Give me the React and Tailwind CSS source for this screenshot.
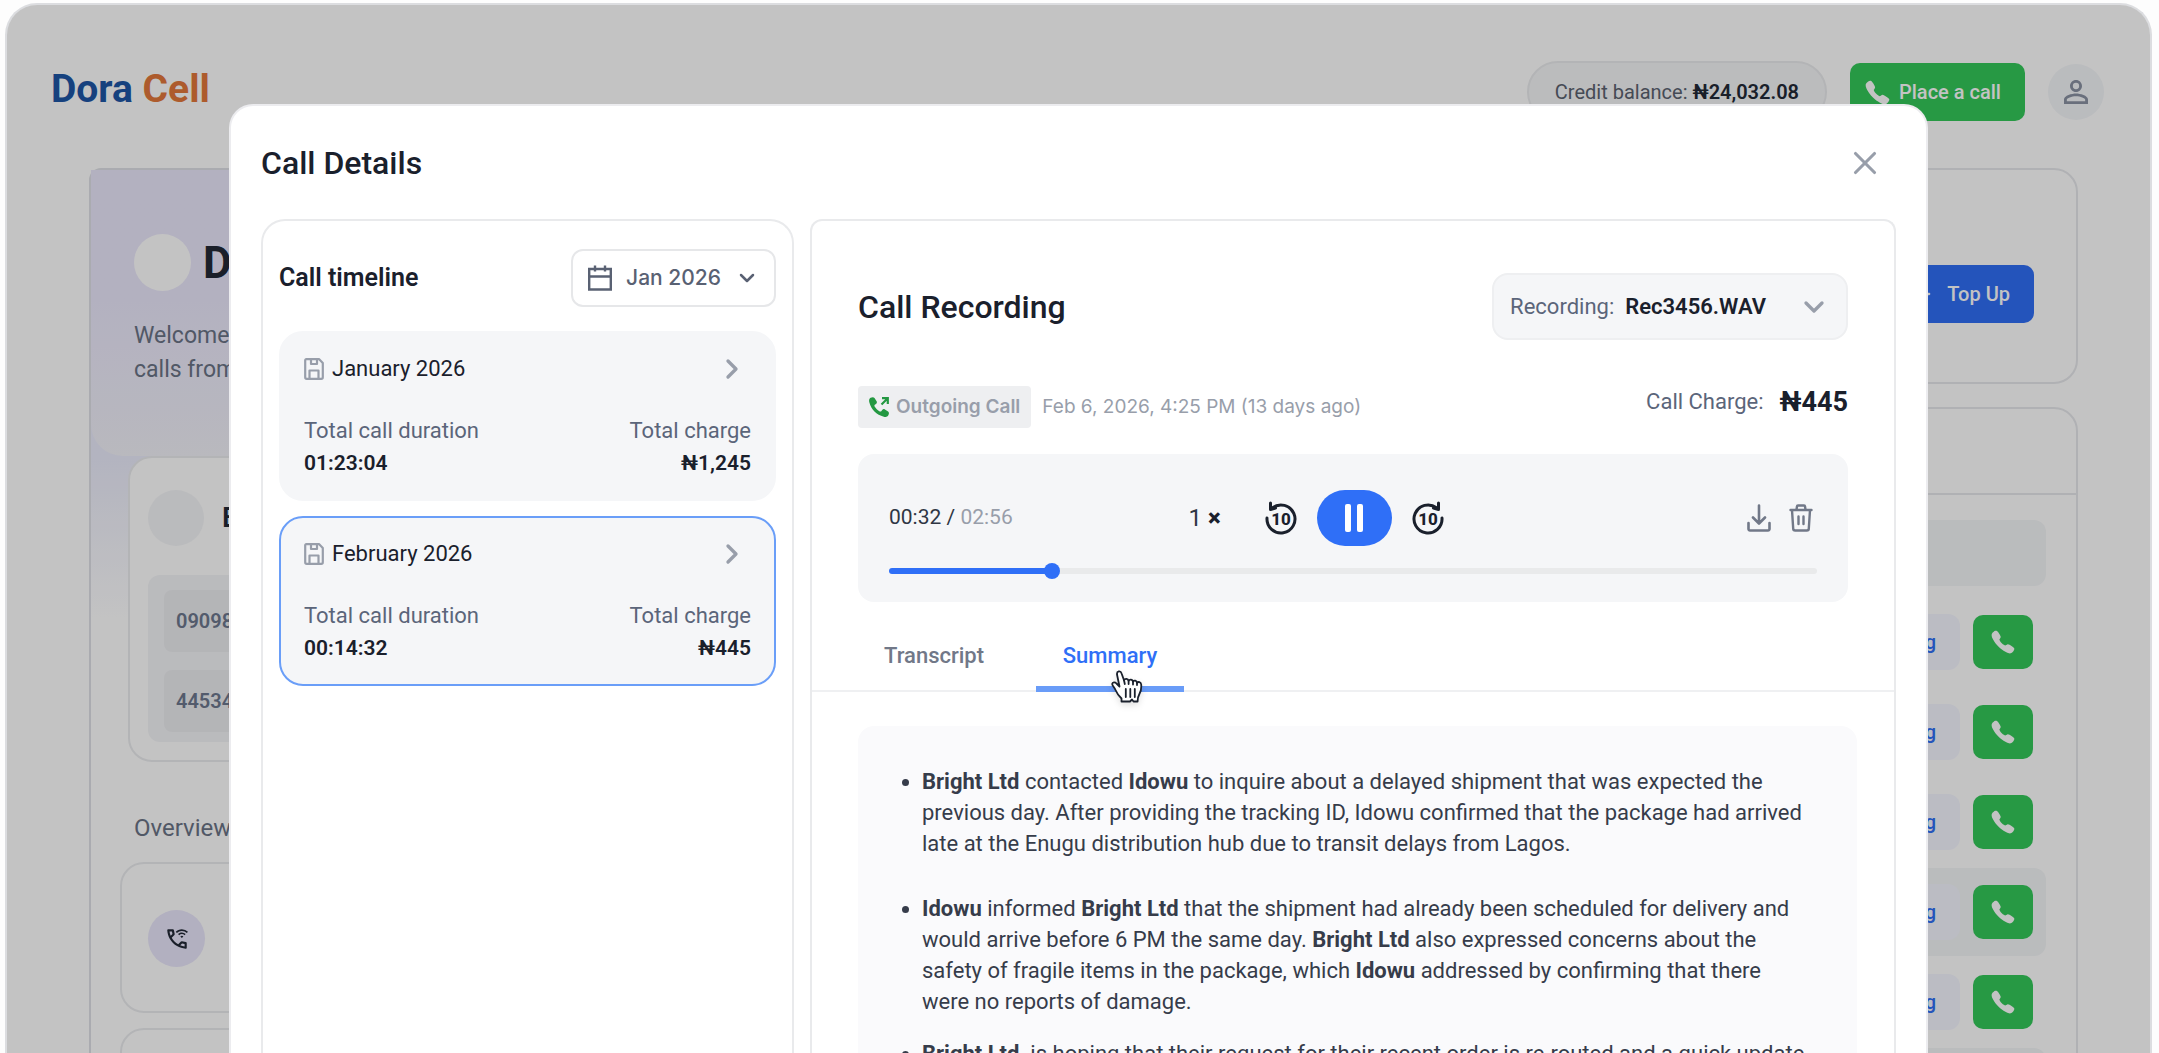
import React, { useState } from 'react';
import { ChevronDown, ChevronRight, Plus, X } from 'lucide-react';
import { IoCall } from 'react-icons/io5';
import { MdPersonOutline, MdOutlineWifiCalling3 } from 'react-icons/md';

const months = [
    { id: 'jan', name: 'January 2026', duration: '01:23:04', charge: '₦1,245' },
    { id: 'feb', name: 'February 2026', duration: '00:14:32', charge: '₦445' },
];

const contacts = [
    { id: 1, shaded: false },
    { id: 2, shaded: false },
    { id: 3, shaded: false },
    { id: 4, shaded: true },
    { id: 5, shaded: false },
    { id: 6, shaded: true },
];

const numbers = ['09098765432', '44534210987'];

const SaveIcon = () => (
    <svg className="w-5 h-[22px] text-[#989eaa]" viewBox="0 0 20 22" fill="none" stroke="currentColor" strokeWidth="2.2" strokeLinejoin="round">
        <path d="M2.200 1.200h13L18.800 5V19.300a1.500 1.500 0 0 1-1.500 1.500H2.700A1.500 1.500 0 0 1 1.200 19.300V2.200a1 1 0 0 1 1-1Z" />
        <path d="M7 1.500V6h6V1.500M5.500 20.500V12.500h9V20.500" />
    </svg>
);

const CalendarIcon = () => (
    <svg className="w-6 h-[26px]" viewBox="0 0 24 26" fill="none" stroke="currentColor" strokeWidth="2.4">
        <path d="M1.200 4h21.600v20.500H1.200ZM1 11.500h22M7 .5v6M17 .5v6" />
    </svg>
);

const OutgoingIcon = () => (
    <svg className="w-5 h-5 text-[#249842]" viewBox="0 0 20 20" fill="currentColor">
        <path d="M1.600.8C3 0 4.600-.2 5.500 1L7.600 4.200c.6 1 .3 2-.6 2.700L5.800 7.800c-.6.6-.5 1.200 0 2 1.200 1.900 2.600 3.300 4.500 4.400.8.5 1.400.6 2 0l.9-1.200c.7-.9 1.700-1.200 2.700-.6l3.200 2.100c1.200.9 1 2.500.1 3.900-1 1.300-2.600 1.800-4.400 1.300C7.500 17.800 2 12.200.300 5.200-.200 3.400.200 1.700 1.600.8Z" />
        <path d="M13 1.200h5.800V7M18.500 1.500 12.500 7.500" fill="none" stroke="currentColor" strokeWidth="2.200" />
    </svg>
);

const SkipIcon = ({ forward }) => (
    <svg className="w-8 h-[34px]" viewBox="0 0 32 34" fill="none" stroke="currentColor" strokeWidth="3" strokeLinecap="round" strokeLinejoin="round">
        <g transform={forward ? 'translate(32 0) scale(-1 1)' : undefined}>
            <path d="M2 17A14 14 0 1 0 7.500 6.800" />
            <path d="M5.500 2v6.500l5-1.500" />
        </g>
        <text x="16" y="24" textAnchor="middle" fill="currentColor" stroke="none" fontSize="17" fontWeight="800">10</text>
    </svg>
);

const DownloadIcon = () => (
    <svg className="w-6 h-7" viewBox="0 0 24 28" fill="none" stroke="currentColor" strokeWidth="2.6" strokeLinecap="round" strokeLinejoin="round">
        <path d="M12 1.500v17.500M6 13.500l6 6 6-6M1.500 19v6a1.500 1.500 0 0 0 1.500 1.500h18A1.500 1.500 0 0 0 22.500 25v-6" />
    </svg>
);

const TrashIcon = () => (
    <svg className="w-6 h-7" viewBox="0 0 24 28" fill="none" stroke="currentColor" strokeWidth="2.4" strokeLinecap="round" strokeLinejoin="round">
        <path d="M1.500 6h21M7.500 5.500 8 2.500a1 1 0 0 1 1-1h6a1 1 0 0 1 1 1l.5 3M3 6l1.200 18.500a2 2 0 0 0 2 2h11.600a2 2 0 0 0 2-2L21 6M9.500 12.500v7.500M14.500 12.500v7.500" />
    </svg>
);

const HandCursor = () => (
    <svg className="w-8 h-[34px] drop-shadow-md" viewBox="0 0 32 34" fill="#fff" stroke="#1a202c" strokeWidth="1.800" strokeLinejoin="round" strokeLinecap="round">
        <path d="M10.500 31.500v-3C8 26 5.500 22.500 4.500 20 3.500 17.500 1 15.500 1.200 13.800 1.500 12 4 11.800 5.500 13.500L8.500 16.500 6 4.500C5.600 1 9.600.200 10.600 3.500L13 10.200C14 8.200 17 8.500 17.600 10.800 18.800 9 21.500 9.400 22 11.600 23.200 10 25.600 10.500 26 12.800 27.200 11.400 30 12 30.200 14.500 30.500 18 30 21 28.600 23.500 27.200 26 26.600 28 26.600 31.500H22.500L21 29.500 19 31.500Z" />
        <path d="M13 10.200 13.800 14M17.600 10.800V14M22 11.600V14.500M26 12.800V15" />
        <path d="M14.800 19v8M19.300 19v8M23.800 19v8" />
    </svg>
);

const Dashboard = () => (
    <div className="text-[#222936]">
        <header className="flex items-center justify-between h-[62px] mt-14 pl-11 pr-[46px]">
            <div className="pb-1.5 text-[39px] font-bold text-[#1e56a5]">
                Dora <span className="text-[#e2783b]">Cell</span>
            </div>
            <div className="flex items-center gap-[23px]">
                <div className="flex items-center h-[62px] px-[26px] rounded-full border-2 border-[#ebecee] bg-[#f5f6f8] text-xl text-[#5b6270]">
                    Credit balance:&nbsp;<span className="font-semibold text-[#222936]">₦24,032.08</span>
                </div>
                <button className="flex items-center gap-2 w-[175px] h-[58px] pl-3.5 rounded-[10px] bg-[#34c85a] text-white text-xl font-medium">
                    <IoCall size={27} />
                    Place a call
                </button>
                <button aria-label="Account" className="flex items-center justify-center w-14 h-14 rounded-full bg-[#f4f6f9] text-[#8a92a3]">
                    <MdPersonOutline size={36} />
                </button>
            </div>
        </header>

        <div className="flex items-start justify-between mt-[45px] pl-[82px] pr-[72px]">
            {/* Welcome column */}
            <section className="w-1/2 h-[1000px] rounded-xl border-2 border-[#dfe0e6] bg-linear-to-b from-[#ebe8fd] via-[#ebecfb] via-29% to-white to-45%">
                <div className="h-[286px] pt-16 pl-[43px] rounded-b-4xl bg-linear-to-b from-[#ebe8fc] from-45% to-[#f2f2f9]">
                    <div className="flex items-center gap-3">
                        <div className="size-[57px] rounded-full bg-white" />
                        <h1 className="text-[44px] leading-[56px] font-bold">Dora</h1>
                    </div>
                    <p className="mt-7 text-[23px] leading-[34px] text-[#6a7386]">
                        Welcome back, manage your<br />calls from one place
                    </p>
                </div>
                <div className="ml-[37px] h-[306px] rounded-3xl border-2 border-[#ebecef] bg-white pl-[18px] pt-8">
                    <div className="flex items-center gap-[18px]">
                        <div className="size-14 rounded-full bg-[#f4f5f8]" />
                        <span className="text-[28px] font-semibold">Enugu Office</span>
                    </div>
                    <ul className="mt-[29px] h-[167px] space-y-[18px] rounded-xl bg-[#f4f5f8] pl-4 pt-[15px] text-xl font-semibold text-[#6d788e]">
                        {numbers.map(number => (
                            <li key={number} className="flex items-center h-[62px] pl-3 rounded-lg bg-[#ecedf0]">{number}</li>
                        ))}
                    </ul>
                </div>
                <h2 className="mt-[49px] ml-[43px] text-2xl leading-[34px] text-[#6a7386]">Overview</h2>
                <div className="ml-[29px] mt-[17px] h-[151px] rounded-3xl border-2 border-[#ebecef] pl-[26px] pt-[46px]">
                    <div className="flex items-center justify-center size-[57px] rounded-full bg-[#e9e6fb]">
                        <MdOutlineWifiCalling3 size={26} />
                    </div>
                </div>
                <div className="ml-[29px] mt-[15px] h-[151px] rounded-3xl border-2 border-[#ebecef]" />
            </section>

            {/* Balance and recent calls column */}
            <div className="w-1/3">
                <section className="flex items-end justify-end h-[216px] pr-[42px] pb-[59px] rounded-3xl border-2 border-[#e7e8ec]">
                    <button className="flex items-center gap-3 h-[58px] px-6 rounded-[10px] bg-[#306ef5] text-white text-xl font-medium">
                        <Plus size={28} />
                        Top Up
                    </button>
                </section>
                <section className="mt-[23px] rounded-3xl border-2 border-[#e7e8ec]">
                    <div className="h-[86px] border-b-2 border-[#e7e8ec]" />
                    <div className="px-[30px] pt-[25px]">
                        <div className="h-[66px] rounded-xl bg-[#f4f6f8]" />
                        <ul className="mt-3 space-y-0.5">
                            {contacts.map(contact => (
                                <li key={contact.id} className={`flex items-center justify-end gap-[13px] h-[88px] pr-[13px] rounded-xl ${contact.shaded ? 'bg-[#f4f6f8]' : ''}`}>
                                    <button className="h-14 px-6 rounded-xl bg-[#f5f6ff] text-[#306ef5] text-xl font-medium">Recording</button>
                                    <button aria-label="Call" className="flex items-center justify-center w-[60px] h-[54px] rounded-[10px] bg-[#34c85a] text-white">
                                        <IoCall size={26} />
                                    </button>
                                </li>
                            ))}
                        </ul>
                    </div>
                </section>
            </div>
        </div>
    </div>
);

const CallTimeline = () => {
    const [selected, setSelected] = useState('feb');

    return (
        <aside className="w-[533px] shrink-0 px-4 pt-7 rounded-t-3xl border-2 border-b-0 border-[#e9eaec]">
            <div className="flex items-center justify-between">
                <h3 className="text-[25px] font-semibold">Call timeline</h3>
                <button className="flex items-center h-[58px] px-[15px] rounded-xl border-2 border-[#e6e7e9] font-['Inter',sans-serif] text-[21px] font-medium text-[#596173]">
                    <CalendarIcon />
                    <span className="mx-[14px]">Jan 2026</span>
                    <ChevronDown size={24} strokeWidth={2.5} />
                </button>
            </div>
            <div className="mt-6 flex flex-col gap-[15px]">
                {months.map(month => (
                    <button
                        key={month.id}
                        onClick={() => setSelected(month.id)}
                        className={`h-[170px] px-[23px] text-left rounded-3xl border-2 bg-[#f5f6f8] text-[22px] leading-8 ${selected === month.id ? 'border-[#6a9ef8]' : 'border-[#f5f6f8]'}`}
                    >
                        <div className="flex items-center justify-between pr-[3px]">
                            <div className="flex items-center gap-2">
                                <SaveIcon />
                                <span>{month.name}</span>
                            </div>
                            <ChevronRight size={32} strokeWidth={2.5} className="text-[#989eaa]" />
                        </div>
                        <div className="mt-[30px] flex justify-between">
                            <div>
                                <div className="text-[#5b657a]">Total call duration</div>
                                <div className="text-[21px] font-semibold">{month.duration}</div>
                            </div>
                            <div className="text-right">
                                <div className="text-[#5b657a]">Total charge</div>
                                <div className="text-[21px] font-semibold">{month.charge}</div>
                            </div>
                        </div>
                    </button>
                ))}
            </div>
        </aside>
    );
};

const Player = () => {
    const [progress, setProgress] = useState(17);

    return (
        <div className="mt-[26px] h-[148px] px-[31px] pt-9 rounded-2xl bg-[#f5f6f8]">
            <div className="flex items-center h-14">
                <div className="flex-1 text-[21px] text-[#2f3644]">
                    00:32 / <span className="text-[#989eaa]">02:56</span>
                </div>
                <div className="flex items-center pr-[70px]">
                    <button className="flex items-center gap-1.5 mr-11 text-2xl text-[#2f3644]">
                        1 <span className="font-black text-[#1a202c]">×</span>
                    </button>
                    <button aria-label="Back 10 seconds"><SkipIcon /></button>
                    <button aria-label="Pause" className="flex items-center justify-center gap-1.5 w-[75px] h-14 mx-5 rounded-full bg-[#2f6ff7]">
                        <span className="w-1.5 h-7 rounded-xs bg-white" />
                        <span className="w-1.5 h-7 rounded-xs bg-white" />
                    </button>
                    <button aria-label="Forward 10 seconds"><SkipIcon forward /></button>
                </div>
                <div className="flex flex-1 justify-end gap-[18px] pr-1 text-[#717888]">
                    <button aria-label="Download"><DownloadIcon /></button>
                    <button aria-label="Delete"><TrashIcon /></button>
                </div>
            </div>
            <input
                type="range"
                aria-label="Seek"
                value={progress}
                onChange={e => setProgress(Number(e.target.value))}
                style={{ backgroundImage: `linear-gradient(to right, #2f6ff7 ${progress}%, #e9eaeb ${progress}%)` }}
                className="block w-full h-1.5 mt-[22px] rounded-full appearance-none [&::-webkit-slider-thumb]:appearance-none [&::-webkit-slider-thumb]:size-4 [&::-webkit-slider-thumb]:rounded-full [&::-webkit-slider-thumb]:bg-[#2f6ff7]"
            />
        </div>
    );
};

const Summary = () => (
    <div className="ml-[46px] mr-[37px] mt-[34px] pt-10 pl-16 rounded-t-2xl bg-[#fafafc] text-[22px] leading-[31px] text-[#363c4a] whitespace-nowrap">
        <ul className="list-disc">
            <li>
                <b>Bright Ltd</b> contacted <b>Idowu</b> to inquire about a delayed shipment that was expected the<br />
                previous day. After providing the tracking ID, Idowu confirmed that the package had arrived<br />
                late at the Enugu distribution hub due to transit delays from Lagos.
            </li>
            <li className="mt-[34px]">
                <b>Idowu</b> informed <b>Bright Ltd</b> that the shipment had already been scheduled for delivery and<br />
                would arrive before 6 PM the same day. <b>Bright Ltd</b> also expressed concerns about the<br />
                safety of fragile items in the package, which <b>Idowu</b> addressed by confirming that there<br />
                were no reports of damage.
            </li>
            <li className="mt-[21px]">
                <b>Bright Ltd</b>&nbsp; is hoping that their request for their recent order is re-routed and a quick update
            </li>
        </ul>
    </div>
);

const CallRecording = () => (
    <section className="flex-1 min-w-0 rounded-t-xl border-2 border-b-0 border-[#e9eaec]">
        <div className="pt-[52px] px-[46px]">
            <div className="flex items-center justify-between">
                <h3 className="text-[32px] font-medium">Call Recording</h3>
                <button className="flex items-center h-[67px] pl-4 pr-4 rounded-2xl border-2 border-[#eeeff1] bg-[#f5f6f8] text-[22px]">
                    <span className="text-[#5b657a]">Recording:</span>
                    <span className="ml-[11px] mr-8 font-semibold">Rec3456.WAV</span>
                    <ChevronDown size={32} strokeWidth={2.5} className="text-[#989eaa]" />
                </button>
            </div>
            <div className="mt-[46px] flex items-start justify-between">
                <div className="flex items-center gap-[11px] font-['Inter',sans-serif] text-[19px] text-[#989eaa]">
                    <span className="flex items-center gap-[7px] h-[42px] px-[11px] rounded bg-[#eeeff1] font-semibold">
                        <OutgoingIcon />
                        Outgoing Call
                    </span>
                    Feb 6, 2026, 4:25 PM (13 days ago)
                </div>
                <div className="flex items-center gap-4 text-[22px] leading-8 text-[#5b657a]">
                    Call Charge:
                    <span className="text-[27px] font-bold text-[#1a202c]">₦445</span>
                </div>
            </div>
            <Player />
        </div>
        <div role="tablist" className="flex h-[90px] pl-[46px] border-b-2 border-[#eff0f2] text-[22px] font-medium">
            <button role="tab" aria-selected="false" className="w-[178px] pt-[18px] pl-[26px] text-left text-[#717888]">Transcript</button>
            <button role="tab" aria-selected="true" className="relative w-[148px] pt-[22px] -mb-0.5 border-b-[6px] border-[#699cf8] text-[#2f6ff7]">
                Summary
                <span className="absolute left-[75px] top-[68px]"><HandCursor /></span>
            </button>
        </div>
        <Summary />
    </section>
);

const App = () => (
    <div className="h-screen overflow-hidden pl-[5px] pr-[7px] pt-[3px] bg-[#fdfdfd] font-['Roboto',sans-serif]">
        <div className="relative h-full overflow-hidden rounded-t-4xl border-2 border-b-0 border-[#dcdde0] bg-white">
            <Dashboard />
            <div className="absolute inset-0 flex bg-black/[0.235] pt-[99px] px-[222px]">
                <div role="dialog" aria-labelledby="dialog-title" className="flex flex-1 flex-col min-w-0 px-[30px] rounded-t-3xl border-2 border-b-0 border-[#ececef] bg-white text-[#1a202c]">
                    <div className="flex items-center justify-between h-[113px] pr-3">
                        <h2 id="dialog-title" className="text-[32px] font-medium">Call Details</h2>
                        <button aria-label="Close"><X size={38} className="text-[#989eaa]" /></button>
                    </div>
                    <div className="flex flex-1 min-h-0 gap-4">
                        <CallTimeline />
                        <CallRecording />
                    </div>
                </div>
            </div>
        </div>
    </div>
);

export default App;
